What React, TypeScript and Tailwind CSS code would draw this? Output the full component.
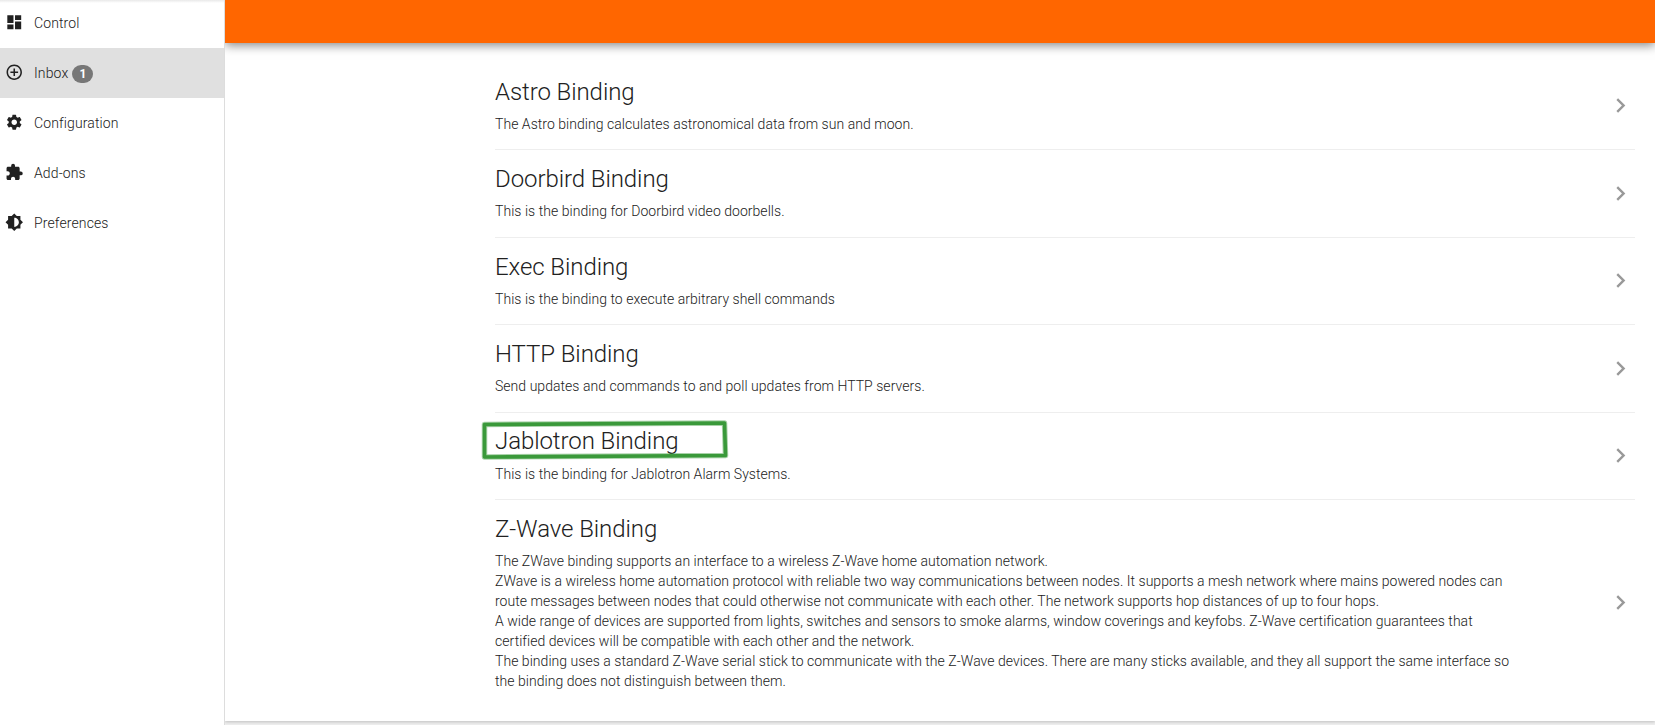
import clsx from "clsx";
import {
  MdBrightness6,
  MdChevronRight,
  MdControlPoint,
  MdDashboard,
  MdExtension,
  MdSettings,
} from "react-icons/md";
import type { IconType } from "react-icons";

type NavItem = {
  label: string;
  icon: IconType;
  badge?: number;
  active?: boolean;
};

type Binding = {
  name: string;
  description: string[];
  marked?: boolean;
};

const navItems: NavItem[] = [
  { label: "Control", icon: MdDashboard },
  { label: "Inbox", icon: MdControlPoint, badge: 1, active: true },
  { label: "Configuration", icon: MdSettings },
  { label: "Add-ons", icon: MdExtension },
  { label: "Preferences", icon: MdBrightness6 },
];

const bindings: Binding[] = [
  {
    name: "Astro Binding",
    description: ["The Astro binding calculates astronomical data from sun and moon."],
  },
  {
    name: "Doorbird Binding",
    description: ["This is the binding for Doorbird video doorbells."],
  },
  {
    name: "Exec Binding",
    description: ["This is the binding to execute arbitrary shell commands"],
  },
  {
    name: "HTTP Binding",
    description: ["Send updates and commands to and poll updates from HTTP servers."],
  },
  {
    name: "Jablotron Binding",
    description: ["This is the binding for Jablotron Alarm Systems."],
    marked: true,
  },
  {
    name: "Z-Wave Binding",
    description: [
      "The ZWave binding supports an interface to a wireless Z-Wave home automation network.",
      "ZWave is a wireless home automation protocol with reliable two way communications between nodes. It supports a mesh network where mains powered nodes can route messages between nodes that could otherwise not communicate with each other. The network supports hop distances of up to four hops.",
      "A wide range of devices are supported from lights, switches and sensors to smoke alarms, window coverings and keyfobs. Z-Wave certification guarantees that certified devices will be compatible with each other and the network.",
      "The binding uses a standard Z-Wave serial stick to communicate with the Z-Wave devices. There are many sticks available, and they all support the same interface so the binding does not distinguish between them.",
    ],
  },
];

function SidebarItem({ item }: { item: NavItem }) {
  const Icon = item.icon;
  return (
    <li
      className={clsx(
        "flex h-[50px] items-center pl-[5px]",
        item.active && "bg-[#e0e0e0]",
      )}
    >
      <Icon className="mb-[2px] size-[18.5px] shrink-0" />
      <span className="ml-[10.5px] tracking-[0.12px]">{item.label}</span>
      {item.badge != null && (
        <span className="mt-[2px] ml-1 flex h-[18px] w-[21px] items-center justify-center rounded-[10px] bg-[#777777] text-xs font-bold text-white">
          {item.badge}
        </span>
      )}
    </li>
  );
}

// hand drawn marker box around a title
function Marker() {
  return (
    <svg
      className="absolute -top-[9px] -left-[14px] h-[42px] w-[248px]"
      viewBox="0 0 248 42"
      fill="none"
      strokeLinejoin="round"
    >
      <path d="M3.5 5.5 L243.5 4 L244.5 36.5 L3.5 38 Z" stroke="#3f9b3f" strokeOpacity="0.45" strokeWidth="5.5" />
      <path d="M3.5 5.5 L243.5 4 L244.5 36.5 L3.5 38 Z" stroke="#3a993a" strokeWidth="3.6" />
    </svg>
  );
}

function BindingRow({ binding, last }: { binding: Binding; last: boolean }) {
  return (
    <li
      className={clsx(
        "flex items-center justify-between pt-[15.8px]",
        last ? "pb-[13px]" : "border-b border-[#eeeeee] pb-[15.4px]",
      )}
    >
      <div className="w-[1018px]">
        <h3 className="relative mb-[8.8px] text-2xl leading-[26.4px] tracking-[-0.08px]">
          {binding.name}
          {binding.marked && <Marker />}
        </h3>
        {binding.description.map((line) => (
          <p key={line} className="text-sm leading-5 tracking-[0.04px]">
            {line}
          </p>
        ))}
      </div>
      <MdChevronRight className="mb-px size-[29px] shrink-0 text-[#999999]" />
    </li>
  );
}

export default function App() {
  return (
    <div className="flex h-[725px] overflow-hidden bg-white font-['Roboto',sans-serif] font-light text-[#212121]">
      <aside className="w-[225px] shrink-0 border-r border-[#dddddd] text-sm">
        <div className="h-[3px] bg-linear-to-b from-[#e9e9e9] to-white" />
        <ul className="-mt-[5px]">
          {navItems.map((item) => (
            <SidebarItem key={item.label} item={item} />
          ))}
        </ul>
      </aside>
      <div className="flex flex-1 flex-col overflow-hidden bg-[#eeeeee]">
        <header className="relative z-10 h-[43px] shrink-0 bg-[#ff6600] shadow-[0_2px_10px_rgba(0,0,0,0.5)]" />
        <main className="h-[678px] shrink-0 bg-white pt-5 pr-5 pl-[270px] shadow-[0_1px_3px_rgba(0,0,0,0.2)]">
          <ul>
            {bindings.map((binding, i) => (
              <BindingRow
                key={binding.name}
                binding={binding}
                last={i === bindings.length - 1}
              />
            ))}
          </ul>
        </main>
      </div>
    </div>
  );
}
